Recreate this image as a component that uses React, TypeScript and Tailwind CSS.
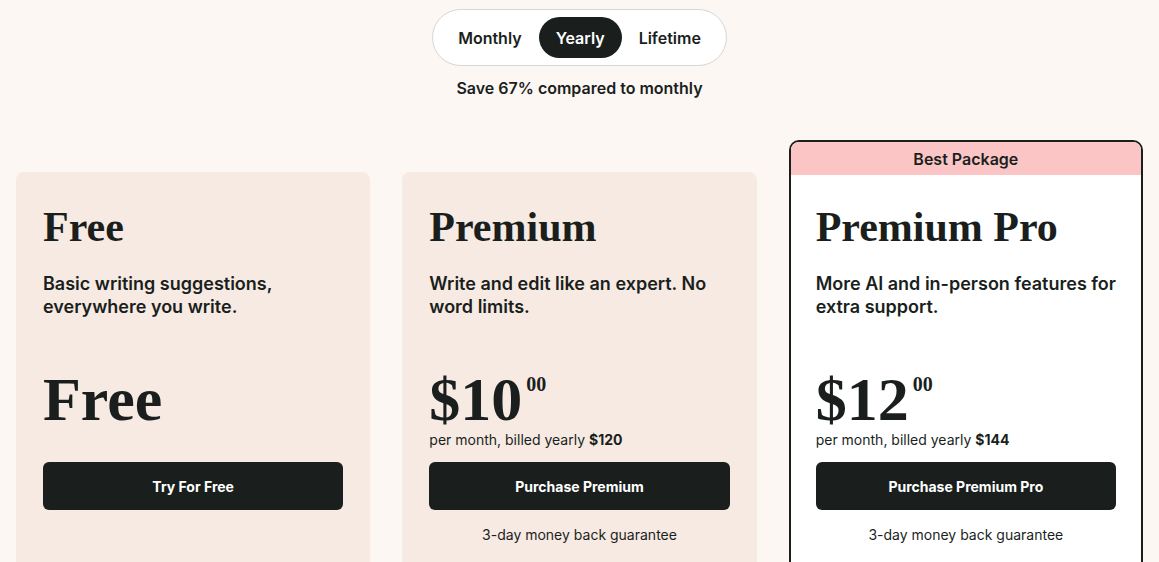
import { useState } from "react";

const sans = { fontFamily: "Inter, 'Noto Sans', sans-serif" };
const serif = { fontFamily: "'Liberation Serif', 'Times New Roman', serif" };

type Plan = {
  name: string;
  desc: string;
  dollars?: string;
  billed?: string;
  cta: string;
  guarantee?: boolean;
  featured?: boolean;
};

const PLANS: Plan[] = [
  {
    name: "Free",
    desc: "Basic writing suggestions, everywhere you write.",
    cta: "Try For Free",
  },
  {
    name: "Premium",
    desc: "Write and edit like an expert. No word limits.",
    dollars: "$10",
    billed: "$120",
    cta: "Purchase Premium",
    guarantee: true,
  },
  {
    name: "Premium Pro",
    desc: "More AI and in-person features for extra support.",
    dollars: "$12",
    billed: "$144",
    cta: "Purchase Premium Pro",
    guarantee: true,
    featured: true,
  },
];

function PlanBody({ p }: { p: Plan }) {
  return (
    <div className={p.featured ? "px-[25px] pt-[31px] pb-12" : "px-[27px] pt-[34px] pb-12"}>
      <h2 style={serif} className="text-[42px] leading-none font-bold text-[#1a1f1d]">
        {p.name}
      </h2>
      <p className="mt-6 -mr-3 text-[18px] leading-[23px] font-semibold text-[#1a1f1d]">{p.desc}</p>

      {/* Price */}
      <div className="mt-[50px] flex items-start text-[#1a1f1d]">
        {p.dollars ? (
          <>
            <span style={serif} className="text-[62px] leading-none font-bold">
              {p.dollars}
            </span>
            <span style={serif} className="ml-1 mt-[6px] text-[20px] leading-none font-bold">
              00
            </span>
          </>
        ) : (
          <span style={serif} className="text-[62px] leading-none font-bold">
            Free
          </span>
        )}
      </div>
      <p className={`text-[14px] leading-5 text-[#1a1f1d] ${p.billed ? "" : "invisible"}`}>
        per month, billed yearly <span className="font-bold">{p.billed ?? "$0"}</span>
      </p>

      <button className="mt-3 w-full h-12 rounded-md bg-[#1a1f1d] text-white text-[14px] font-bold">
        {p.cta}
      </button>
      {p.guarantee && (
        <p className="mt-[15px] text-center text-[14px] leading-5 text-[#1a1f1d]">3-day money back guarantee</p>
      )}
    </div>
  );
}

export default function App() {
  const [period, setPeriod] = useState("Yearly");

  return (
    <div style={sans} className="min-h-screen bg-[#fdf7f4] text-[#1a1f1d] overflow-hidden">
      {/* Billing toggle */}
      <div className="flex flex-col items-center pt-[9px]">
        <div className="flex items-center rounded-full border border-[#d6d6d6] bg-white py-[7px] px-[8px]">
          {["Monthly", "Yearly", "Lifetime"].map((t) => (
            <button
              key={t}
              onClick={() => setPeriod(t)}
              className={`h-[41px] px-[17px] rounded-full text-[16px] font-semibold ${
                period === t ? "bg-[#1a1f1d] text-white" : "text-[#1a1f1d]"
              }`}
            >
              {t}
            </button>
          ))}
        </div>
        <p className="mt-3 text-[16px] leading-5 font-semibold">Save 67% compared to monthly</p>
      </div>

      {/* Plans */}
      <div className="grid grid-cols-3 gap-8 px-4 mt-[42px]">
        {PLANS.map((p) =>
          p.featured ? (
            <div key={p.name} className="rounded-[10px] border-2 border-[#1a1f1d] bg-white overflow-hidden">
              <div className="h-[33px] flex items-center justify-center bg-[#fcc5c5] text-[16px] font-semibold">
                Best Package
              </div>
              <PlanBody p={p} />
            </div>
          ) : (
            <div key={p.name} className="mt-8 rounded-lg bg-[#f7eae3]">
              <PlanBody p={p} />
            </div>
          )
        )}
      </div>
    </div>
  );
}
